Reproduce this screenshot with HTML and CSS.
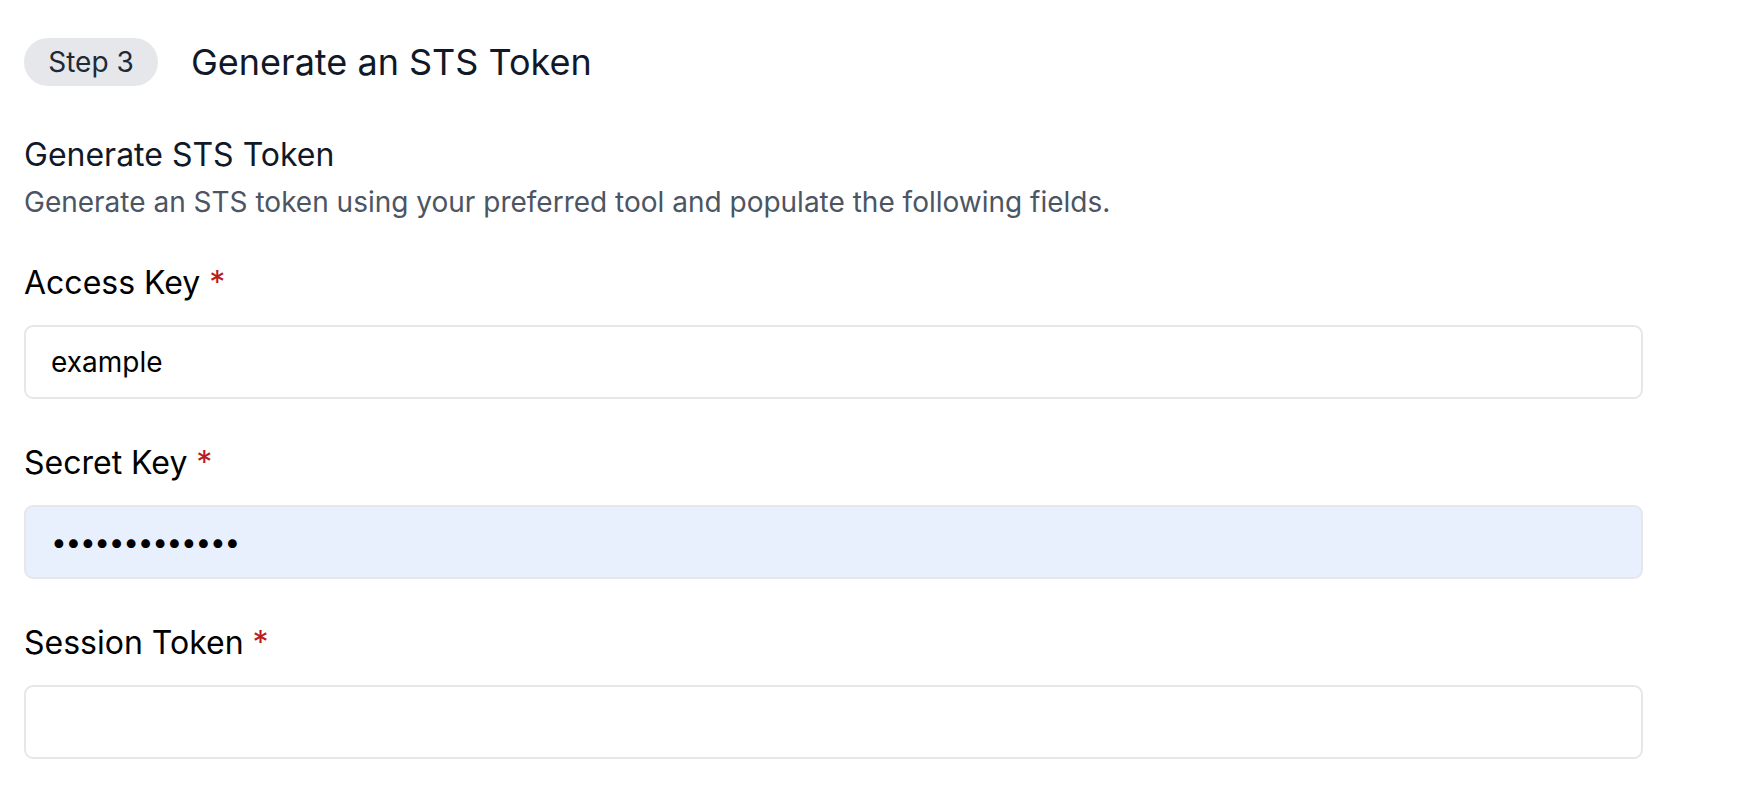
FILE: index.html
```html
<!DOCTYPE html>
<html lang="en">
<head>
<meta charset="utf-8">
<title>Generate an STS Token</title>
<link rel="stylesheet" href="styles.css">
</head>
<body>
<main class="page">
  <header class="step-head">
    <span class="step-pill">Step 3</span>
    <h1 class="step-title">Generate an STS Token</h1>
  </header>
  <section class="intro">
    <h2 class="intro-title">Generate STS Token</h2>
    <p class="intro-desc">Generate an STS token using your preferred tool and populate the following fields.</p>
  </section>
  <form class="fields">
    <div class="field">
      <label class="field-label" for="ak">Access Key <span class="req">*</span></label>
      <input class="field-input" id="ak" type="text" value="example">
    </div>
    <div class="field">
      <label class="field-label" for="sk">Secret Key <span class="req">*</span></label>
      <input class="field-input autofilled" id="sk" type="password" value="abcdefghijklm">
    </div>
    <div class="field">
      <label class="field-label" for="st">Session Token <span class="req">*</span></label>
      <input class="field-input" id="st" type="text" value="">
    </div>
  </form>
</main>
</body>
</html>
```
FILE: styles.css
```css
* { box-sizing: border-box; }
html, body { margin: 0; padding: 0; background: #fff; }
body { font-family: Inter, "Noto Sans", sans-serif; color: #111; }
.page { padding: 38px 0 0 24px; width: 1643px; }
.step-head { display: flex; align-items: center; gap: 33px; height: 48px; }
.step-pill {
  display: inline-flex; align-items: center; justify-content: center;
  height: 48px; width: 134px; border-radius: 24px;
  background: #e5e7eb; color: #1f2937; font-size: 28px;
}
.step-title { margin: 0; font-size: 36px; font-weight: 400; color: #111827; }
.intro { margin-top: 45px; }
.intro-title { margin: 0; font-size: 32px; font-weight: 400; color: #111827; line-height: 48px; }
.intro-desc { margin: 3px 0 0; font-size: 28px; color: #4b5563; line-height: 40px; }
.fields { margin-top: 37px; display: flex; flex-direction: column; gap: 40px; }
.field { display: flex; flex-direction: column; }
.field-label { font-size: 32px; line-height: 48px; color: #000; }
.req { color: #b91c1c; }
.field-input {
  margin-top: 18px; height: 74px; width: 100%;
  border: 2px solid #e5e7eb; border-radius: 9px;
  padding: 0 25px; font-family: Inter, "Noto Sans", sans-serif;
  font-size: 28px; color: #000; background: #fff; outline: none;
}
.field-input.autofilled { background: #e8f0fe; letter-spacing: -1.3px; }
```
